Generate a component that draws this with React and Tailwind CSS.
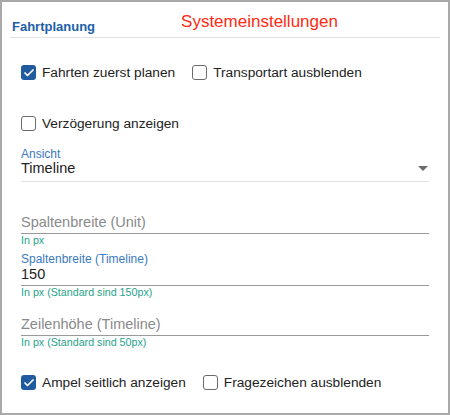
import { Check } from 'lucide-react';

const font = { fontFamily: '"Liberation Sans", Arial, sans-serif' };

const Box = ({ checked }) =>
  checked ? (
    <span className="flex h-[15px] w-[15px] items-center justify-center rounded-[3px] bg-[#1f5b9e]">
      <Check size={12} strokeWidth={3.5} className="text-white" />
    </span>
  ) : (
    <span className="h-[15px] w-[15px] rounded-[3px] border-[1.5px] border-[#6b6b6b] bg-white" />
  );

const CheckItem = ({ checked, label }) => (
  <label className="flex items-center gap-[6px] text-[13.7px] leading-[17px] text-[#222]">
    <Box checked={checked} />
    <span>{label}</span>
  </label>
);

const Field = ({ label, value, placeholder, hint, className = '' }) => (
  <div className={`mx-[19px] ${className}`}>
    {label && <div className="text-[12px] leading-[14px] text-[#3b79c0]">{label}</div>}
    <div className="border-b border-[#9a9a9a] pb-[2px] text-[14.5px] leading-[17px]">
      {value ? <span className="text-[#222]">{value}</span> : <span className="text-[#8a8a8a]">{placeholder}</span>}
    </div>
    <div className="text-[10.7px] leading-[12px] text-[#1fa38a]">{hint}</div>
  </div>
);

export default function App() {
  return (
    <div style={font} className="h-[415px] w-[450px] border-2 border-[#a9a9a9] bg-white">
      <div className="mx-[8px] flex items-end border-b border-[#e3e3e3] pt-[10px]">
        <h3 className="mb-[2px] ml-[2px] text-[13px] font-bold leading-[16px] text-[#1c5ea8]">Fahrtplanung</h3>
        <h2 className="mb-[5px] ml-[86px] text-[17px] leading-[20px] text-[#ff2a12]">Systemeinstellungen</h2>
      </div>

      <div className="ml-[19px] mt-[26px] flex items-center gap-[17px]">
        <CheckItem checked label="Fahrten zuerst planen" />
        <CheckItem label="Transportart ausblenden" />
      </div>

      <div className="ml-[19px] mt-[34px] flex items-center">
        <CheckItem label="Verzögerung anzeigen" />
      </div>

      <div className="mx-[19px] mt-[15px]">
        <div className="text-[12px] leading-[14px] text-[#3b79c0]">Ansicht</div>
        <div className="-mt-[1px] flex items-center justify-between border-b border-[#e2e2e2] pb-[4px]">
          <span className="text-[14.5px] leading-[17px] text-[#222]">Timeline</span>
          <span className="mr-[1px] h-0 w-0 border-x-[5px] border-t-[5px] border-x-transparent border-t-[#6b6b6b]" />
        </div>
      </div>

      <Field className="mt-[32px]" placeholder="Spaltenbreite (Unit)" hint="In px" />
      <Field className="mt-[6px]" label="Spaltenbreite (Timeline)" value="150" hint="In px (Standard sind 150px)" />
      <Field className="mt-[18px]" placeholder="Zeilenhöhe (Timeline)" hint="In px (Standard sind 50px)" />

      <div className="ml-[19px] mt-[26px] flex items-center gap-[17px]">
        <CheckItem checked label="Ampel seitlich anzeigen" />
        <CheckItem label="Fragezeichen ausblenden" />
      </div>
    </div>
  );
}
